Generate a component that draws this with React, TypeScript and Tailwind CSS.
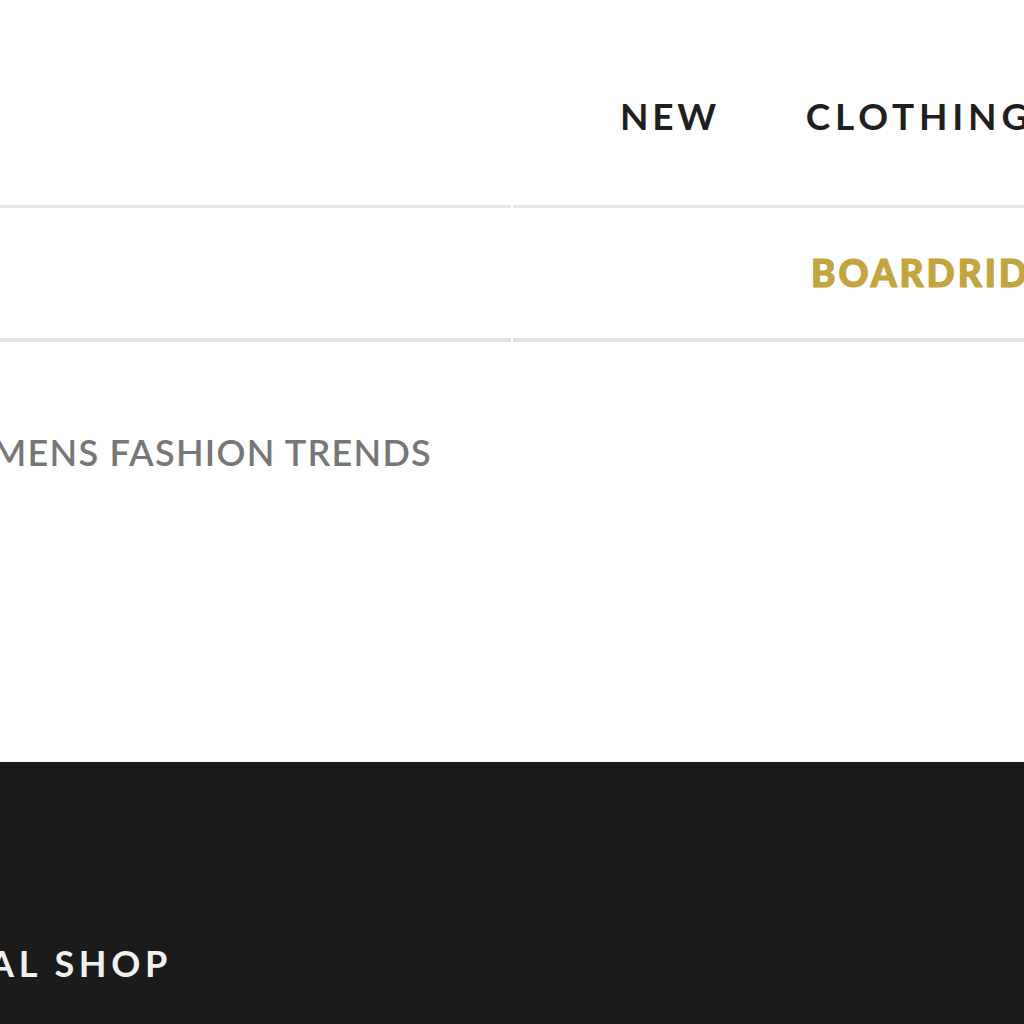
import React from "react";

export default function App() {
  const font = { fontFamily: "Lato, 'Noto Sans', sans-serif" };
  return (
    <div className="w-[1024px] h-[1024px] overflow-hidden bg-white" style={font}>
      {/* top nav */}
      <div className="h-[205px] flex items-start pl-[620px] pt-[94px] whitespace-nowrap">
        <span className="text-[37px] leading-[44px] font-bold tracking-[0.1em] text-[#1f1f1f]">NEW</span>
        <span className="ml-[86px] text-[37px] leading-[44px] font-bold tracking-[0.13em] text-[#1f1f1f]">CLOTHING</span>
      </div>
      <div className="flex gap-[2px]">
        <div className="h-[3px] w-[511px] bg-[#e6e6e6]" />
        <div className="h-[3px] flex-1 bg-[#e6e6e6]" />
      </div>
      {/* brand row */}
      <div className="h-[130px] flex items-start pl-[811px] pt-[43px] whitespace-nowrap">
        <span className="text-[37px] leading-[44px] font-black tracking-[0.08em] text-[#c3a540] [-webkit-text-stroke:1.2px_#c3a540]">BOARDRIDERS</span>
      </div>
      <div className="flex gap-[2px]">
        <div className="h-[4px] w-[511px] bg-[#e3e3e3]" />
        <div className="h-[4px] flex-1 bg-[#e3e3e3]" />
      </div>
      {/* content */}
      <div className="h-[420px] pt-[88px]">
        <div className="w-[432px] flex justify-end overflow-hidden whitespace-nowrap">
          <span className="text-[36px] leading-[44px] font-semibold tracking-[0.035em] text-[#777777]">WOMENS FASHION TRENDS</span>
        </div>
      </div>
      {/* footer */}
      <div className="h-[262px] bg-[#1b1b1b] pt-[179px]">
        <div className="w-[172px] flex justify-end overflow-hidden whitespace-nowrap">
          <span className="text-[36px] leading-[44px] font-bold tracking-[0.13em] text-[#f0f0f0]">OFFICIAL SHOP</span>
        </div>
      </div>
    </div>
  );
}
